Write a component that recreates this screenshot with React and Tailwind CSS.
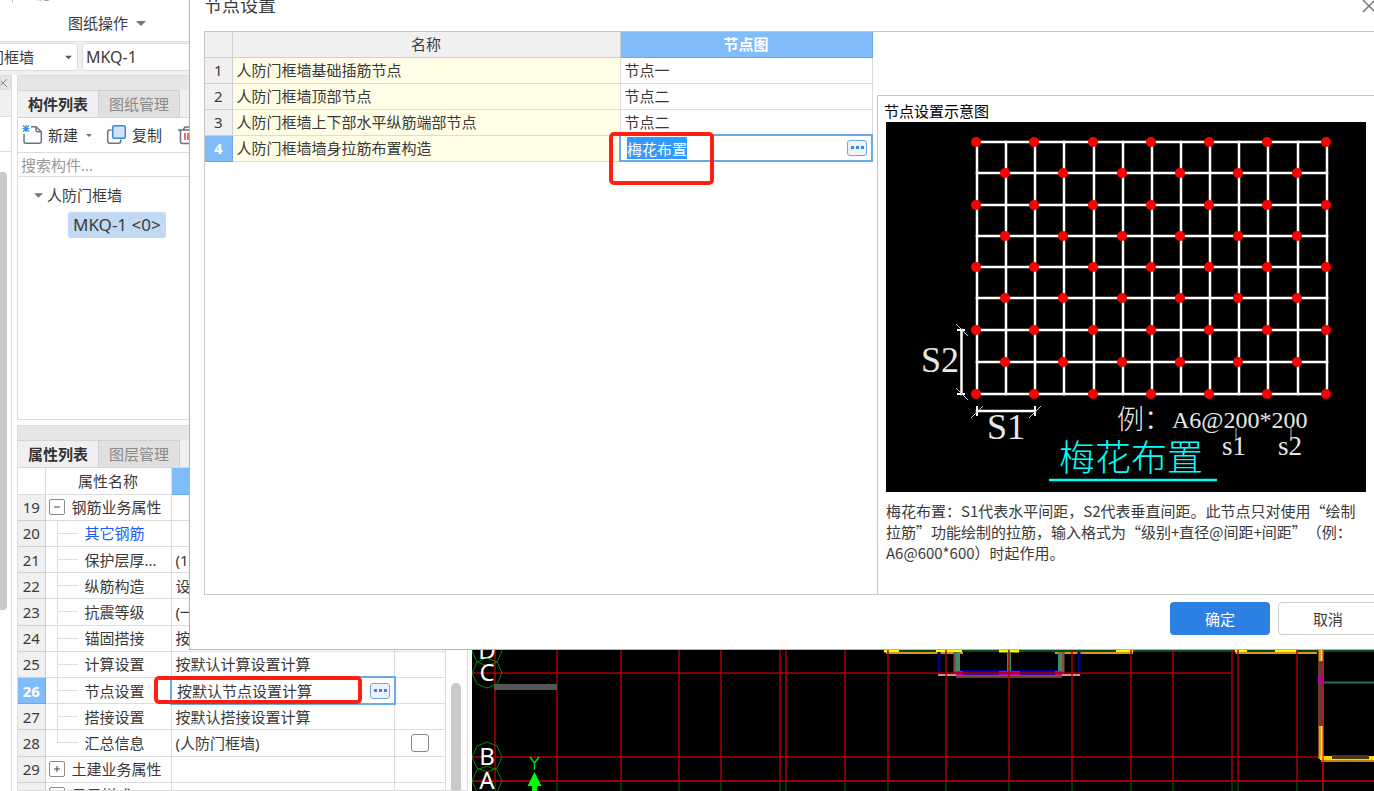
import React, { useState } from "react";

const properties = [
  { no: 19, name: "钢筋业务属性", group: "open" },
  { no: 20, name: "其它钢筋", link: true },
  { no: 21, name: "保护层厚...", value: "(12)" },
  { no: 22, name: "纵筋构造", value: "设置插筋" },
  { no: 23, name: "抗震等级", value: "(一级)" },
  { no: 24, name: "锚固搭接", value: "按默认计算" },
  { no: 25, name: "计算设置", value: "按默认计算设置计算" },
  { no: 26, name: "节点设置", value: "按默认节点设置计算", active: true },
  { no: 27, name: "搭接设置", value: "按默认搭接设置计算" },
  { no: 28, name: "汇总信息", value: "(人防门框墙)", check: true, last: true },
  { no: 29, name: "土建业务属性", group: "closed" },
  { no: 30, name: "显示样式", group: "closed" },
];

const nodes = [
  { name: "人防门框墙基础插筋节点", value: "节点一" },
  { name: "人防门框墙顶部节点", value: "节点二" },
  { name: "人防门框墙上下部水平纵筋端部节点", value: "节点二" },
  { name: "人防门框墙墙身拉筋布置构造", value: "梅花布置", active: true },
];

function Caret({ className }) {
  return (
    <svg className={className} width="10" height="5" viewBox="0 0 10 5" aria-hidden="true">
      <path d="M0 0h10L5 5z" fill="currentColor" />
    </svg>
  );
}

function MoreButton({ label }) {
  return (
    <button
      aria-label={label}
      className="flex h-4 w-5 shrink-0 items-center justify-center rounded-[3px] border border-[#6aa9ea] bg-[#eef3fb]"
    >
      <svg width="14" height="4" viewBox="0 0 14 4">
        <path d="M1 0h3v3H1zM6 0h3v3H6zM11 0h3v3h-3z" fill="#3b86dd" />
      </svg>
    </button>
  );
}

function Tabs({ items }) {
  return (
    <div role="tablist" className="flex h-[28px] shrink-0 border-b border-[#d4d7da] bg-[#f0f0f0]">
      {items.map((item, i) => (
        <button
          key={item}
          role="tab"
          aria-selected={i === 0}
          className={
            i === 0
              ? "w-[80px] border-t border-[#d4d7da] font-bold text-[#333]"
              : "w-[82px] border border-b-0 border-[#cbd0d5] bg-[#e0e0e0] text-[#8a8a8a]"
          }
        >
          {item}
        </button>
      ))}
    </div>
  );
}

function ComponentPanel() {
  return (
    <section className="flex h-[345px] shrink-0 flex-col border border-[#dcdcdc] bg-white">
      <div className="h-[14px] shrink-0 bg-[#e6e6e6]"></div>
      <Tabs items={["构件列表", "图纸管理"]} />
      <div className="flex h-[35px] shrink-0 items-center border-b border-[#dcdcdc] pl-1">
        <button className="flex items-center gap-[5px]">
          <svg width="21" height="22" viewBox="0 0 21 22" fill="none">
            <path d="M9 2.700h5l5.300 5v9.600a2 2 0 0 1-2 2H4a2 2 0 0 1-2-2V10M14 2.700v3.500a1.500 1.500 0 0 0 1.500 1.500h3.800" stroke="#6b7280" strokeWidth="1.500" />
            <path d="M1 1.500l6 6M7 1.500l-6 6M4 1v7M.5 4.500h7" stroke="#3b8ff0" strokeWidth="1.200" />
          </svg>
          <span>新建</span>
          <Caret className="ml-[3px] w-[6px] text-[#777]" />
        </button>
        <button className="ml-[14px] flex items-center gap-[5px]">
          <svg width="21" height="22" viewBox="0 0 21 22" fill="none">
            <path d="M5.500 6H3.700a2 2 0 0 0-2 2v9.300a2 2 0 0 0 2 2h9a2 2 0 0 0 2-2V15.500" stroke="#6b7280" strokeWidth="1.500" />
            <rect x="6.700" y="1.700" width="12.600" height="12.600" rx="1.500" fill="#cfe3fd" stroke="#3b86dd" strokeWidth="1.500" />
          </svg>
          <span>复制</span>
        </button>
        <button aria-label="删除" className="ml-4">
          <svg width="20" height="22" viewBox="0 0 20 22" fill="none">
            <path d="M0 6h20M5 6l2-3h6l2 3M2.500 6v11.500a2 2 0 0 0 2 2h11a2 2 0 0 0 2-2V6" stroke="#6b7280" strokeWidth="1.500" />
            <path d="M7 9v7M10 9v7M13 9v7" stroke="#e0413c" strokeWidth="1.500" />
          </svg>
        </button>
      </div>
      <input
        aria-label="搜索构件"
        placeholder="搜索构件..."
        className="h-[24px] shrink-0 border-b border-[#dcdcdc] px-[3px] placeholder:text-[#999]"
      />
      <ul className="pt-[3px]">
        <li>
          <button className="flex h-[30px] items-center gap-1 pl-4">
            <Caret className="w-[9px] text-[#777]" />
            人防门框墙
          </button>
          <button className="mt-[2px] ml-[50px] h-[26px] rounded-[3px] bg-[#c1d9f2] px-[5px] text-[17px]">
            MKQ-1 &lt;0&gt;
          </button>
        </li>
      </ul>
    </section>
  );
}

function NameCell({ row }) {
  if (row.group) {
    return (
      <div className="flex items-center gap-[7px] pl-[3px]">
        <button
          aria-label={row.name}
          className="flex size-4 items-center justify-center rounded-[2px] border border-[#8c8c8c]"
        >
          <svg width="6" height="6" viewBox="0 0 6 6">
            <path d={row.group === "open" ? "M0 3h6" : "M0 3h6M3 0v6"} stroke="#444" />
          </svg>
        </button>
        {row.name}
      </div>
    );
  }
  return (
    <div className="flex h-[25px] items-center pl-[11px]">
      <span className={row.last ? "h-[13px] self-start border-l border-[#ddd]" : "h-full border-l border-[#ddd]"}></span>
      <span className="mr-[7px] w-5 border-t border-[#ddd]"></span>
      {row.link ? (
        <a href="#rebar" className="text-[#1e5bff]">
          {row.name}
        </a>
      ) : (
        row.name
      )}
    </div>
  );
}

function PropertyPanel() {
  const [summary, setSummary] = useState(false);

  return (
    <section className="mt-[5px] flex min-h-0 flex-1 flex-col border border-[#dcdcdc] bg-white">
      <div className="h-[14px] shrink-0 bg-[#e6e6e6]"></div>
      <Tabs items={["属性列表", "图层管理"]} />
      <div className="flex min-h-0 flex-1 overflow-hidden">
        <div className="min-w-0 flex-1">
          <table className="h-[341px] w-full table-fixed border-collapse">
            <colgroup>
              <col className="w-[27px]" />
              <col className="w-[126px]" />
              <col />
              <col className="w-[51px]" />
            </colgroup>
            <thead>
              <tr className="h-[26px]">
                <th className="border-r border-b border-[#dcdcdc] p-0"></th>
                <th className="border-r border-b border-[#dcdcdc] p-0 font-normal">属性名称</th>
                <th className="border-r border-b border-[#69a9e8] bg-[#80bbfa] p-0"></th>
                <th className="border-r border-b border-[#dcdcdc] p-0"></th>
              </tr>
            </thead>
            <tbody>
              {properties.map((row) => (
                <tr key={row.no} className="h-[26px]">
                  <th
                    className={
                      row.active
                        ? "border-r border-b border-[#69a9e8] bg-[#80bbfa] p-0 font-bold text-white"
                        : "border-r border-b border-[#cfcfcf] bg-[#f0f0f0] p-0 font-normal"
                    }
                  >
                    {row.no}
                  </th>
                  <td className="border-r border-b border-[#dcdcdc] p-0">
                    <NameCell row={row} />
                  </td>
                  <td
                    className={
                      row.active
                        ? "border-2 border-[#69a9e8] p-0"
                        : "border-r border-b border-[#dcdcdc] p-0 pl-1"
                    }
                  >
                    {row.active ? (
                      <div className="flex items-center pr-1 pl-[5px]">
                        <input aria-label={row.name} defaultValue={row.value} className="h-5 min-w-0 flex-1" />
                        <MoreButton label="编辑节点设置" />
                      </div>
                    ) : (
                      row.value
                    )}
                  </td>
                  <td className="border-r border-b border-[#dcdcdc] p-0">
                    {row.check && (
                      <input
                        type="checkbox"
                        aria-label={row.name}
                        checked={summary}
                        onChange={(e) => setSummary(e.target.checked)}
                        className="mx-auto block size-[18px] appearance-none rounded-[3px] border border-[#888] bg-white checked:bg-[#2c80e4]"
                      />
                    )}
                  </td>
                </tr>
              ))}
            </tbody>
          </table>
        </div>
        <div className="w-[21px] shrink-0 pt-[215px] pl-[5px]">
          <div className="h-full w-[10px] rounded-t-full bg-[#c9c9c9]"></div>
        </div>
      </div>
    </section>
  );
}

const axes = [495, 557, 621, 679, 721, 780, 786, 845, 888, 946, 1009, 1072, 1131, 1173, 1232, 1238, 1297, 1323];
const bubbles = [
  { label: "D", y: 651 },
  { label: "C", y: 673 },
  { label: "B", y: 757 },
  { label: "A", y: 781 },
];

function Drawing() {
  return (
    <svg
      className="h-full w-full bg-black"
      viewBox="472 75 902 716"
      preserveAspectRatio="xMinYMin slice"
      aria-label="平面图"
    >
      <g fill="none">
        <path d="M884 651h490" stroke="#0b4a16" strokeWidth="2" />
        <path d="M884 651h15M936 651h26M999 651h20M1116 651h17M1235 651h12M1275 651h22" stroke="#ffff00" strokeWidth="3" />
        <path d="M886 653h77M1055 653h78M1236 653h81" stroke="#d8961c" strokeWidth="2" />
        <path d="M939 652v23M1079 652v23" stroke="#00007c" strokeWidth="3" />
        <path d="M938 675h142" stroke="#d09090" strokeWidth="2" />
        <path d="M956 671h106" stroke="#0000a8" strokeWidth="2" />
        <path d="M956 674h106" stroke="#35009a" strokeWidth="3" />
        <path d="M956 677h106" stroke="#7a3830" strokeWidth="2" />
        <path d="M955 652v22M1063 652v22" stroke="#8a4b48" strokeWidth="3" />
        <path d="M958 652v20M1060 652v20M1009 652v20" stroke="#468b6a" strokeWidth="4" />
        <path d="M956 673h7M999 673h21M1055 673h7" stroke="#c800a0" strokeWidth="4" />
      </g>
      <g stroke="#a80000" strokeWidth="1.500">
        {axes.map((x) => (
          <path key={x} d={`M${x} 640V781`} />
        ))}
        <path d="M472 673H1232M472 757H1374" />
        <path d="M472 781H1374" stroke="#c80000" />
      </g>
      {axes.map((x) => (
        <path key={x} d={`M${x} 782v12`} stroke="#004d00" strokeWidth="1.500" />
      ))}
      <g fill="none">
        <path d="M1321 650v109" stroke="#e0a020" strokeWidth="5" />
        <path d="M1322 650v109" stroke="#ffee00" strokeWidth="2" />
        <path d="M1321 661v65" stroke="#6b383a" strokeWidth="5" />
        <path d="M1321 676v7" stroke="#b000c8" strokeWidth="5" />
        <path d="M1320 758h54" stroke="#ffd800" strokeWidth="4" />
        <path d="M1321 761h53" stroke="#c88010" strokeWidth="2" />
        <path d="M1332 757h37" stroke="#4c3a10" strokeWidth="4" />
        <path d="M1324 682.500h50" stroke="#2d6b50" strokeWidth="2" />
        <path d="M1323 650v141" stroke="#e00000" strokeWidth="1" />
      </g>
      <path d="M494 687h63" stroke="#565656" strokeWidth="6" />
      {bubbles.map((b) => (
        <g key={b.label}>
          <path
            d={`M487 ${b.y - 15}l10 4 5 11-5 11-10 4-10-4-5-11 5-11z`}
            fill="none"
            stroke="#008a00"
          />
          <text x="487" y={b.y + 8} textAnchor="middle" fill="#fff" className="font-['Noto_Sans'] text-[24px]">
            {b.label}
          </text>
        </g>
      ))}
      <path d="M530 757l4.500 6 4.500-6M534.500 763v7" fill="none" stroke="#00e000" strokeWidth="1.500" />
      <path d="M534.500 772l7 14h-4.500v8h-5v-8h-4.500z" fill="#00ff00" />
    </svg>
  );
}

const gridX = [977, 1006, 1035, 1064, 1094, 1123, 1152, 1181, 1210, 1239, 1268, 1298, 1327];
const gridY = [142, 173, 205, 236, 267, 298, 330, 362, 394];

function NodeDiagram() {
  return (
    <svg className="block w-full bg-black" viewBox="886 122 480 370" aria-label="梅花布置示意图">
      <g stroke="#fff" strokeWidth="2.500" strokeLinecap="square">
        {gridX.map((x) => (
          <path key={x} d={`M${x} 142V394`} />
        ))}
        {gridY.map((y) => (
          <path key={y} d={`M977 ${y}H1327`} />
        ))}
        <path d="M961.500 330v64M977 411h58" />
        <path d="M958 330h6M958 394h6M977 407v8M1035 407v8" strokeWidth="2" />
      </g>
      <path d="M956 324l12 12M956 388l12 12M971 418l12-12M1029 418l12-12" stroke="#ccc" />
      {gridY.map((y, r) =>
        gridX
          .filter((x, c) => c % 2 === r % 2)
          .map((x) => <circle key={`${x}-${y}`} cx={x - 1} cy={y} r="5" fill="#f00" />)
      )}
      <g fill="#e8e8e8" className="font-['Liberation_Serif','Noto_Sans_CJK_SC',serif] font-light">
        <text x="921" y="372" className="text-[36px]">S2</text>
        <text x="987" y="439" className="text-[36px]">S1</text>
        <text x="1117" y="429" className="text-[27px]">例：</text>
        <text x="1172" y="428" className="text-[24px]">A6@200*200</text>
        <text x="1222" y="455" className="text-[27px]">s1</text>
        <text x="1278" y="455" className="text-[27px]">s2</text>
        <text x="1059" y="471" fill="#0ff" className="text-[36px]">梅花布置</text>
      </g>
      <path d="M1236 428v12M1291 428v12" stroke="#bbb" />
      <path d="M1049 480h168" stroke="#0ff" strokeWidth="2.500" />
    </svg>
  );
}

function NodeDialog() {
  return (
    <div
      role="dialog"
      aria-label="节点设置"
      className="absolute top-0 -right-3 left-[189px] z-10 flex h-[650px] flex-col border-b border-l border-[#b4b4b4] bg-white pr-2 pl-[14px]"
    >
      <header className="flex h-[31px] shrink-0 items-start justify-between">
        <h1 className="-mt-[7px] text-[18px] leading-6">节点设置</h1>
        <button aria-label="关闭" className="-mt-px mr-[2px]">
          <svg width="14" height="14" viewBox="0 0 14 14">
            <path d="M1 1l12 12M13 1L1 13" stroke="#777" strokeWidth="1.500" />
          </svg>
        </button>
      </header>
      <div className="flex min-h-0 flex-1 border border-[#c6c6c6]">
        <div className="relative w-[668px] shrink-0">
          <table className="w-full table-fixed border-collapse">
            <colgroup>
              <col className="w-[27px]" />
              <col />
              <col className="w-[252px]" />
            </colgroup>
            <thead>
              <tr className="h-[25px] bg-[#f0f0f0]">
                <th className="border-r border-b border-[#cfcfcf] p-0"></th>
                <th className="border-r border-b border-[#cfcfcf] p-0 font-normal">名称</th>
                <th className="border-r border-b border-[#69a9e8] bg-[#80bbfa] p-0 font-bold text-white">节点图</th>
              </tr>
            </thead>
            <tbody>
              {nodes.map((node, i) => (
                <tr key={node.name} className="h-[26px]">
                  <th
                    className={
                      node.active
                        ? "border-r border-b border-[#69a9e8] bg-[#80bbfa] p-0 font-bold text-white"
                        : "border-r border-b border-[#cfcfcf] bg-[#f0f0f0] p-0 font-normal"
                    }
                  >
                    {i + 1}
                  </th>
                  <td className="border-r border-b border-[#dcdcdc] bg-[#fffde6] p-0 pl-1">{node.name}</td>
                  <td
                    className={
                      node.active
                        ? "border-2 border-[#69a9e8] p-0"
                        : "border-r border-b border-[#dcdcdc] p-0 pl-1"
                    }
                  >
                    {node.active ? (
                      <div className="flex items-center justify-between pr-1 pl-[6px]">
                        <input
                          aria-label={node.name}
                          defaultValue={node.value}
                          className="h-[22px] w-[60px] bg-[#3399ff] text-white"
                        />
                        <MoreButton label="选择节点图" />
                      </div>
                    ) : (
                      node.value
                    )}
                  </td>
                </tr>
              ))}
            </tbody>
          </table>
          <div className="pointer-events-none absolute top-[100px] left-[404px] h-[53px] w-[105px] rounded-[5px] border-4 border-[#ff2012]"></div>
        </div>
        <aside className="mt-[63px] ml-1 flex-1 border-t border-l border-[#c6c6c6] pt-[5px] pr-[11px]">
          <h2 className="pl-[6px] leading-[21px] text-black">节点设置示意图</h2>
          <div className="pl-2">
            <NodeDiagram />
            <p className="pt-2 font-['Noto_Sans_CJK_SC',sans-serif] leading-[21px] [text-spacing-trim:space-all]">
              梅花布置：S1代表水平间距，S2代表垂直间距。此节点只对使用“绘制拉筋”功能绘制的拉筋，输入格式为“级别+直径@间距+间距”（例：A6@600*600）时起作用。
            </p>
          </div>
        </aside>
      </div>
      <footer className="flex h-[54px] shrink-0 items-start justify-end gap-2 pt-[7px]">
        <button className="h-[33px] w-[100px] rounded-[4px] bg-[#2c80e4] text-white">确定</button>
        <button className="h-[33px] w-[100px] rounded-[4px] border border-[#cfcfcf] bg-white">取消</button>
      </footer>
    </div>
  );
}

export default function App() {
  return (
    <div className="relative flex h-screen flex-col overflow-hidden bg-white font-['Noto_Sans','Noto_Sans_CJK_SC',sans-serif] text-[15px] leading-5 text-[#3a3a3a]">
      <header className="shrink-0">
        <div className="flex h-[42px] flex-col border-b border-[#dcdcdc]">
          <div className="flex h-[3px] items-end overflow-hidden pl-3">
            <span className="h-full border-l border-[#ccc] pl-2 text-[#999]"></span>
            <span className="text-[#888]">过滤</span>
          </div>
          <button className="mt-[10px] ml-[68px] flex items-center gap-2 self-start">
            图纸操作
            <Caret className="text-[#777]" />
          </button>
        </div>
        <div className="flex h-[33px] items-start gap-1 bg-[#f0f0f0] pt-px">
          <div className="relative -ml-[46px]">
            <select
              aria-label="构件类型"
              className="h-[28px] w-[124px] appearance-none rounded-[4px] border border-[#dcdcdc] bg-white pl-1"
            >
              <option>人防门框墙</option>
            </select>
            <Caret className="pointer-events-none absolute top-3 right-[6px] w-[7px] text-[#555]" />
          </div>
          <select
            aria-label="构件"
            className="h-[28px] w-[140px] appearance-none rounded-[4px] border border-[#dcdcdc] bg-white pl-[3px] text-[16px]"
          >
            <option>MKQ-1</option>
          </select>
        </div>
      </header>
      <main className="flex min-h-0 flex-1">
        <aside className="flex w-3 shrink-0 flex-col border-r border-[#dcdcdc]">
          <button aria-label="关闭面板" className="flex h-[15px] w-full items-center border border-[#dcdcdc] bg-[#e6e6e6]">
            <svg width="6" height="8" viewBox="0 0 6 8">
              <path d="M-2 0l8 8M6 0l-8 8" stroke="#888" />
            </svg>
          </button>
          <div className="h-[27px] border-b border-[#dcdcdc] bg-[#f0f0f0]"></div>
          <div className="h-[35px] border-b border-[#dcdcdc]"></div>
          <div className="mt-5 h-[438px] w-[7px] rounded-r-[4px] bg-[#c9c9c9]"></div>
        </aside>
        <div className="relative ml-[5px] flex w-[451px] shrink-0 flex-col">
          <ComponentPanel />
          <PropertyPanel />
          <div className="pointer-events-none absolute top-[601px] left-[137px] h-[28px] w-[208px] rounded-[5px] border-4 border-[#ff2012]"></div>
        </div>
        <div className="ml-1 min-w-0 flex-1">
          <Drawing />
        </div>
      </main>
      <NodeDialog />
    </div>
  );
}
